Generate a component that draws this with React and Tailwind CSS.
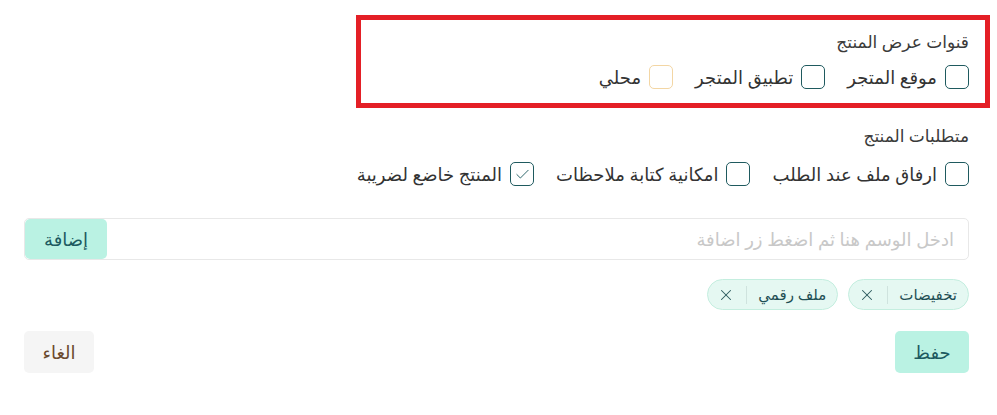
import { X, Check } from "lucide-react";

const channels = [
  { label: "موقع المتجر", tone: "teal" },
  { label: "تطبيق المتجر", tone: "teal" },
  { label: "محلي", tone: "amber" },
];

const requirements = [
  { label: "ارفاق ملف عند الطلب", checked: false },
  { label: "امكانية كتابة ملاحظات", checked: false },
  { label: "المنتج خاضع لضريبة", checked: true },
];

const tags = ["تخفيضات", "ملف رقمي"];

function Box({ checked, tone }) {
  return (
    <span
      className={`w-[24px] h-[24px] rounded-[5px] border-[1.5px] flex items-center justify-center shrink-0 ${
        tone === "amber" ? "border-[#f3d6a4]" : "border-[#1f5a5f]"
      }`}
    >
      {checked && <Check className="w-[17px] h-[17px] text-[#1f5a5f]" strokeWidth={1.3} />}
    </span>
  );
}

export default function App() {
  return (
    <div
      dir="rtl"
      className="w-[997px] h-[415px] bg-white text-[#333] pr-[28px] pl-[24px] pt-[30px] font-['Noto_Sans','DejaVu_Sans',sans-serif]"
    >
      {/* channels (highlighted) */}
      <div className="relative">
        <div className="absolute -top-[15px] -right-[21px] left-[332px] -bottom-[19px] border-[5px] border-[#e41f26] pointer-events-none" />
        <div className="text-[17px] leading-[24px] text-[#3a3a3a]">قنوات عرض المنتج</div>
        <div className="flex items-center gap-[22px] mt-[11px]">
          {channels.map((c) => (
            <label key={c.label} className="flex items-center gap-[8px] text-[18px] leading-[24px]">
              <Box tone={c.tone} />
              <span>{c.label}</span>
            </label>
          ))}
        </div>
      </div>

      {/* requirements */}
      <div className="mt-[35px]">
        <div className="text-[17px] leading-[24px] text-[#3a3a3a]">متطلبات المنتج</div>
        <div className="flex items-center gap-[22px] mt-[14px]">
          {requirements.map((r) => (
            <label key={r.label} className="flex items-center gap-[8px] text-[18px] leading-[24px]">
              <Box checked={r.checked} />
              <span>{r.label}</span>
            </label>
          ))}
        </div>
      </div>

      {/* tag input */}
      <div className="mt-[32px] flex h-[42px] border border-[#e8e8e8] rounded-[5px] overflow-hidden">
        <input
          className="flex-1 px-[14px] text-[18px] outline-none placeholder:text-[#c8c8c8]"
          placeholder="ادخل الوسم هنا ثم اضغط زر اضافة"
        />
        <button className="w-[82px] bg-[#baf2e3] text-[#1d5a60] text-[18px] rounded-[5px]">إضافة</button>
      </div>

      {/* tags */}
      <div className="flex gap-[10px] mt-[19px]">
        {tags.map((t) => (
          <span
            key={t}
            className="h-[31px] flex items-center rounded-full bg-[#e5f8f2] border border-[#c4eedf] text-[#1f4f55] text-[15px] pr-[11px] pl-[9px]"
          >
            <span>{t}</span>
            <span className="w-px h-[18px] bg-[#cfe3de] mx-[11px]" />
            <X className="w-[18px] h-[18px] text-[#2b5a5e]" strokeWidth={1.4} />
          </span>
        ))}
      </div>

      {/* actions */}
      <div className="flex justify-between mt-[21px]">
        <button className="w-[74px] h-[42px] rounded-[5px] bg-[#baf2e3] text-[#1d5a60] text-[18px]">حفظ</button>
        <button className="w-[70px] h-[42px] rounded-[5px] bg-[#f5f5f5] text-[#6b4a2e] text-[18px]">الغاء</button>
      </div>
    </div>
  );
}
